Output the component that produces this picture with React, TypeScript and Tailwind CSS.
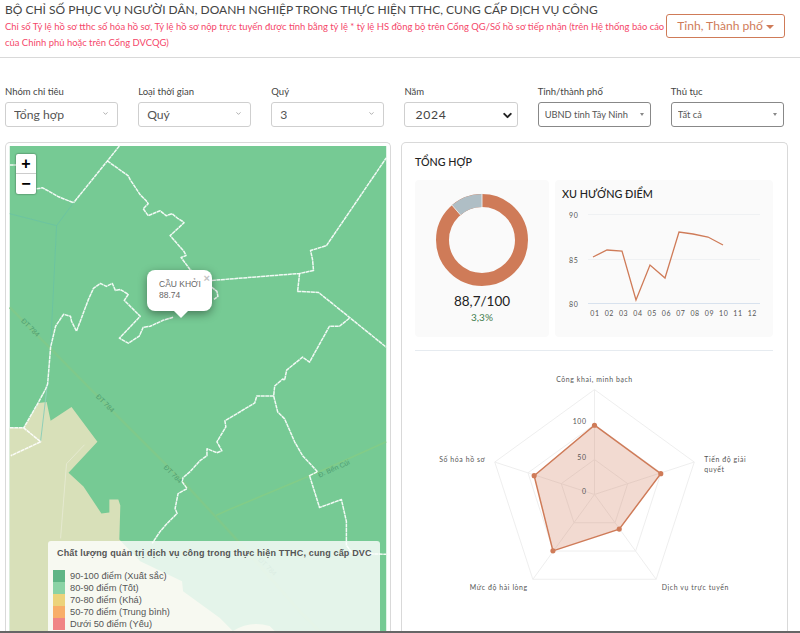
import React from "react";
import { ChevronDown } from "lucide-react";

const Sel = ({ label, value, kind }: { label: string; value: string; kind: "chev" | "bold" | "tri" }) => (
  <div className="flex flex-col">
    <span className="text-[9.5px] leading-[14px] text-[#444] mt-[1px] mb-[3px]">{label}</span>
    <div className={`h-[25px] rounded-[3px] border flex items-center justify-between ${kind === "chev" ? "border-[#cfcfcf] pl-[8px] pr-[8px] pt-[1px] text-[12.2px] text-[#555]" : kind === "bold" ? "border-[#cfcfcf] pl-[10px] pr-[3px] pt-[1px] text-[12.2px] tracking-[0.7px] text-[#444]" : "border-[#888] pl-[6px] pr-[6px] text-[9.3px] text-[#555]"}`}>
      <span className="truncate">{value}</span>
      {kind === "chev" && <ChevronDown size={7} strokeWidth={2} className="text-[#777] mb-[3px]" />}
      {kind === "bold" && <ChevronDown size={13} strokeWidth={3.6} className="text-[#222]" />}
      {kind === "tri" && <span className="w-0 h-0 border-l-[2.5px] border-r-[2.5px] border-t-[3px] border-l-transparent border-r-transparent border-t-[#888]" />}
    </div>
  </div>
);

const LINE = "rgba(255,255,255,0.9)";
const borders = [
  "119,146 107,161 73,203",
  "36,189 42,188 58,197 73,203",
  "9,165 25,165",
  "107,161 128,176 130,180 140,195 146,201 148,204 143,209 148,216 155,213 160,211 166,216 172,214 178,219 183,222 184,223 170,236 184,252 186,256 181,258 190,270 200,277 212,288 217,292 218,297 214,300",
  "212,281 300,274 314,271 313,260 311,251 327,246 387,158",
  "300,274 298,292 319,293 350,318 387,348",
  "350,319 340,327 330,327 310,363 303,358 287,371 285,381 283,380 275,387 274,397",
  "173,318 163,321 150,327 143,328 139,337 128,344 119,339 140,317 124,301 128,295 120,290 115,291 112,284 106,287 100,284 93,289 88,300 76,332 71,322 70,317 63,315 55,327 50,348 48,373 47,385 45,390 38,403 23,429",
  "9,429 23,429 40,443 10,457",
  "274,397 257,397 255,404 225,422 226,428 217,443 222,452 217,454 207,450 207,457 200,462 190,473 183,479 182,483 187,490 178,495 175,510 177,515 167,525 160,533 152,545",
  "274,397 278,413 285,420 295,443 303,457 318,473 310,477 320,509 342,501 347,523 347,547 353,555 387,556",
];

const Map = () => (
  <svg viewBox="9 146 378 487" className="absolute inset-0 w-full h-full">
    <rect x="9" y="146" width="378" height="487" fill="#76ca94" />
    <polygon points="9,429 23,429 38,404 46,403 50,422 71,408 97,443 68,474 83,488 101,515 109,514 109,501 118,501 120,507 119,541 140,563 182,583 183,593 220,620 233,633 9,633" fill="#d8e0b9" />
    <path d="M233 633 Q250 622 270 628 L275 633 Z" fill="#d8e0b9" />
    <path d="M9 214 L56 226 L73 203 M56 226 L50 348" fill="none" stroke="#6cc4a0" strokeWidth="1" />
    <path d="M9 308 L88 388 L183 483 L233 537 L300 613 L320 633" fill="none" stroke="#7fc98b" strokeWidth="2.4" />
    <path d="M216 517 L227 512 L320 473 L387 443" fill="none" stroke="#82cc88" strokeWidth="1.6" />
    <path d="M84 446 L66 465 L60 540" fill="none" stroke="#e5e9d0" strokeWidth="1" />
    <path d="M47 383 L40 442" fill="none" stroke="#8fcfb8" strokeWidth="1" />
    {borders.map((p, i) => (
      <polyline key={i} points={p} fill="none" stroke={LINE} strokeWidth="1.5" strokeDasharray="4 0.5" strokeLinejoin="round" />
    ))}
    <g fontSize="7" fill="#4f9e72" fontFamily="'Liberation Sans',sans-serif">
      <text x="20" y="322" transform="rotate(45 20 322)">ĐT 784</text>
      <text x="95" y="398" transform="rotate(45 95 398)">ĐT 784</text>
      <text x="163" y="469" transform="rotate(45 163 469)">ĐT 784</text>
      <text x="258" y="562" transform="rotate(45 258 562)">ĐT 784</text>
      <text x="320" y="479" transform="rotate(-24 320 479)">Đ. Bến Củi</text>
    </g>
  </svg>
);

const Legend = () => {
  const rows: [string, string][] = [
    ["bg-[#5fb585]", "90-100 điểm (Xuất sắc)"],
    ["bg-[#8bd3a5]", "80-90 điểm (Tốt)"],
    ["bg-[#ecd37a]", "70-80 điểm (Khá)"],
    ["bg-[#f8ae68]", "50-70 điểm (Trung bình)"],
    ["bg-[#f08585]", "Dưới 50 điểm (Yếu)"],
  ];
  return (
    <div className="absolute left-[39px] right-[7px] top-[395px] h-[120px] rounded-[3px] bg-white/80 pl-[5px] pt-[6px] font-['Liberation_Sans',sans-serif]">
      <div className="text-[9px] leading-[12px] font-bold text-[#555] pl-[4px] whitespace-nowrap tracking-[0.16px] mb-[11px]">Chất lượng quản trị dịch vụ công trong thực hiện TTHC, cung cấp DVC</div>
      {rows.map(([c, t]) => (
        <div key={t} className="flex items-center h-[12px]">
          <span className={`w-[12px] h-[12px] mr-[5px] ${c}`} />
          <span className="text-[9.3px] leading-[12px] text-[#555]">{t}</span>
        </div>
      ))}
    </div>
  );
};

const Popup = () => (
  <div className="absolute left-[138px] top-[124px] w-[65px] h-[41px] rounded-[8px] bg-white shadow-[0_3px_10px_rgba(0,0,0,0.4)] pl-[12px] pt-[9px] font-['Liberation_Sans',sans-serif] text-[8.5px] leading-[11px] text-[#666]">
    <div>CẦU KHỞI</div>
    <div>88.74</div>
    <span className="absolute right-[2px] top-[1px] text-[11px] leading-[14px] font-bold text-[#c3c3c3]">×</span>
    <span className="absolute left-[27px] top-[41px] w-0 h-0 border-l-[7px] border-r-[7px] border-t-[7px] border-l-transparent border-r-transparent border-t-white" />
  </div>
);

const Zoom = () => (
  <div className="absolute left-[7px] top-[8px] w-[20px] rounded-[2px] bg-white shadow-[0_0_2px_rgba(0,0,0,0.6)] font-['Liberation_Sans',sans-serif] text-black">
    <div className="h-[20px] flex items-center justify-center border-b border-[#ccc] text-[16px] font-bold leading-none">+</div>
    <div className="h-[20px] flex items-center justify-center text-[16px] font-bold leading-none">−</div>
  </div>
);

const Donut = () => {
  const r = 39.5;
  const c = 2 * Math.PI * r;
  const f = 0.887;
  return (
    <svg width="96" height="96" viewBox="0 0 96 96">
      <circle cx="48" cy="48" r={r} fill="none" stroke="#cf7b58" strokeWidth="13" />
      <circle cx="48" cy="48" r={r} fill="none" stroke="#afbec5" strokeWidth="13" strokeDasharray={`${c * (1 - f)} ${c}`} transform={`rotate(${-90 - 360 * (1 - f)} 48 48)`} />
      <path d="M48 1.5 V15 M17.7 12.8 L26.5 23" stroke="#eef0f0" strokeWidth="0.9" />
    </svg>
  );
};

const Trend = () => {
  const pts = "38,77 52,70 67,71 81,120 95,85 110,98 124,52 138,54 153,57 168,65";
  const labels = ["01", "02", "03", "04", "05", "06", "07", "08", "09", "10", "11", "12"];
  return (
    <svg viewBox="0 0 218 157" className="w-full h-full absolute inset-0">
      <g stroke="#eff1f3" strokeWidth="1">
        <line x1="33" x2="205" y1="34.5" y2="34.5" />
        <line x1="33" x2="205" y1="79.5" y2="79.5" />
      </g>
      <line x1="33" x2="205" y1="123.5" y2="123.5" stroke="#d8e2ee" strokeWidth="1" />
      <polyline points={pts} fill="none" stroke="#cf7b58" strokeWidth="1.3" />
      <g fontSize="7" fill="#555" letterSpacing="0.6">
        <text x="14" y="38">90</text>
        <text x="14" y="83">85</text>
        <text x="14" y="127">80</text>
        {labels.map((l, i) => (
          <text key={l} x={40 + i * 14.3} y="136" textAnchor="middle">{l}</text>
        ))}
      </g>
    </svg>
  );
};

const Radar = () => {
  const cx = 179;
  const cy = 145;
  const ang = [0, 1, 2, 3, 4].map((i) => (-90 + i * 72) * (Math.PI / 180));
  const ring = (R: number) => ang.map((a) => `${cx + R * Math.cos(a)},${cy + R * Math.sin(a)}`).join(" ");
  const data: [number, number][] = [[179, 75], [246, 124], [204, 180], [137, 202], [118, 126]];
  return (
    <svg viewBox="0 0 357 283" className="absolute inset-0 w-full h-full">
      {[35.3, 70.7, 106].map((R) => (
        <polygon key={R} points={ring(R)} fill="none" stroke="#eeeeee" strokeWidth="1" />
      ))}
      {ang.map((a, i) => (
        <line key={i} x1={cx} y1={cy} x2={cx + 106 * Math.cos(a)} y2={cy + 106 * Math.sin(a)} stroke="#eeeeee" strokeWidth="1" />
      ))}
      <polygon points={data.map((d) => d.join(",")).join(" ")} fill="#cf7b58" fillOpacity="0.28" stroke="#cf7b58" strokeWidth="1.5" />
      {data.map((d, i) => (
        <circle key={i} cx={d[0]} cy={d[1]} r="2.6" fill="#cf7b58" />
      ))}
      <g fontSize="7" fill="#555" letterSpacing="0.6">
        <text x="171" y="74" textAnchor="end">100</text>
        <text x="171" y="110" textAnchor="end">50</text>
        <text x="171" y="145" textAnchor="end">0</text>
        <text x={cx} y="31" textAnchor="middle">Công khai, minh bạch</text>
        <text x="290" y="112">Tiến độ giải</text>
        <text x="290" y="122">quyết</text>
        <text x="247" y="242">Dịch vụ trực tuyến</text>
        <text x="53" y="242">Mức độ hài lòng</text>
        <text x="22" y="112">Số hóa hồ sơ</text>
      </g>
    </svg>
  );
};

export default function App() {
  return (
    <div className="h-[633px] w-[800px] overflow-hidden flex flex-col border-b-2 border-[#666] bg-white font-['Lato',sans-serif]">
      <header className="h-[58px] shrink-0 border-b border-[#d9d9d9] pl-[5px] pr-[15px] pt-[2px] flex justify-between">
        <div className="w-[660px]">
          <div className="text-[12px] leading-[16px] text-[#444] whitespace-nowrap">BỘ CHỈ SỐ PHỤC VỤ NGƯỜI DÂN, DOANH NGHIỆP TRONG THỰC HIỆN TTHC, CUNG CẤP DỊCH VỤ CÔNG</div>
          <p className="text-[9.45px] leading-[16px] text-[#f5476a] mt-[1px]">Chỉ số Tỷ lệ hồ sơ tthc số hóa hồ sơ, Tỷ lệ hồ sơ nộp trực tuyến được tính bằng tỷ lệ * tỷ lệ HS đồng bộ trên Cổng QG/Số hồ sơ tiếp nhận (trên Hệ thống báo cáo của Chính phủ hoặc trên Cổng DVCQG)</p>
        </div>
        <div className="mt-[12px] h-[24px] w-[119px] shrink-0 rounded-[3px] border border-[#cf7b58] text-[#cf7b58] text-[12.1px] flex items-center justify-center gap-[3px]">
          <span>Tỉnh, Thành phố</span>
          <span className="w-0 h-0 mt-[1px] border-l-[4px] border-r-[4px] border-t-[4px] border-l-transparent border-r-transparent border-t-[#cf7b58]" />
        </div>
      </header>
      <div className="grid grid-cols-6 gap-x-[20px] pl-[5px] pr-[16px] mt-[26px] shrink-0">
        <Sel label="Nhóm chỉ tiêu" value="Tổng hợp" kind="chev" />
        <Sel label="Loại thời gian" value="Quý" kind="chev" />
        <Sel label="Quý" value="3" kind="chev" />
        <Sel label="Năm" value="2024" kind="bold" />
        <Sel label="Tỉnh/thành phố" value="UBND tỉnh Tây Ninh" kind="tri" />
        <Sel label="Thủ tục" value="Tất cả" kind="tri" />
      </div>
      <div className="flex-1 min-h-0 flex gap-[10px] pl-[5px] pr-[12px] mt-[15px]">
        <section className="w-[386px] shrink-0 rounded-t-[5px] border border-b-0 border-[#d9d9d9] p-[3px] pb-0">
          <div className="relative w-full h-full overflow-hidden">
            <Map />
            <Zoom />
            <Popup />
            <Legend />
          </div>
        </section>
        <section className="flex-1 rounded-t-[5px] border border-b-0 border-[#d9d9d9] pl-[13px] pr-[14px] pt-[11px] flex flex-col">
          <h2 className="text-[10.7px] leading-[16px] font-medium text-[#222] mb-[10px]">TỔNG HỢP</h2>
          <div className="flex gap-[6px] h-[157px] shrink-0">
            <div className="w-[134px] rounded-[4px] bg-[#fafafa] flex flex-col items-center pt-[12px]">
              <Donut />
              <div className="text-[13.5px] leading-[20px] text-[#222] mt-[3px]">88,7/100</div>
              <div className="text-[10px] leading-[12px] text-[#3f7d4f]">3,3%</div>
            </div>
            <div className="flex-1 rounded-[4px] bg-[#fafafa] relative">
              <Trend />
              <div className="relative pl-[7px] pt-[6px] text-[10.8px] leading-[16px] font-medium text-[#222]">XU HƯỚNG ĐIỂM</div>
            </div>
          </div>
          <div className="relative flex-1 mt-[13px] border-t border-[#e6ebf0]">
            <Radar />
          </div>
        </section>
      </div>
    </div>
  );
}
